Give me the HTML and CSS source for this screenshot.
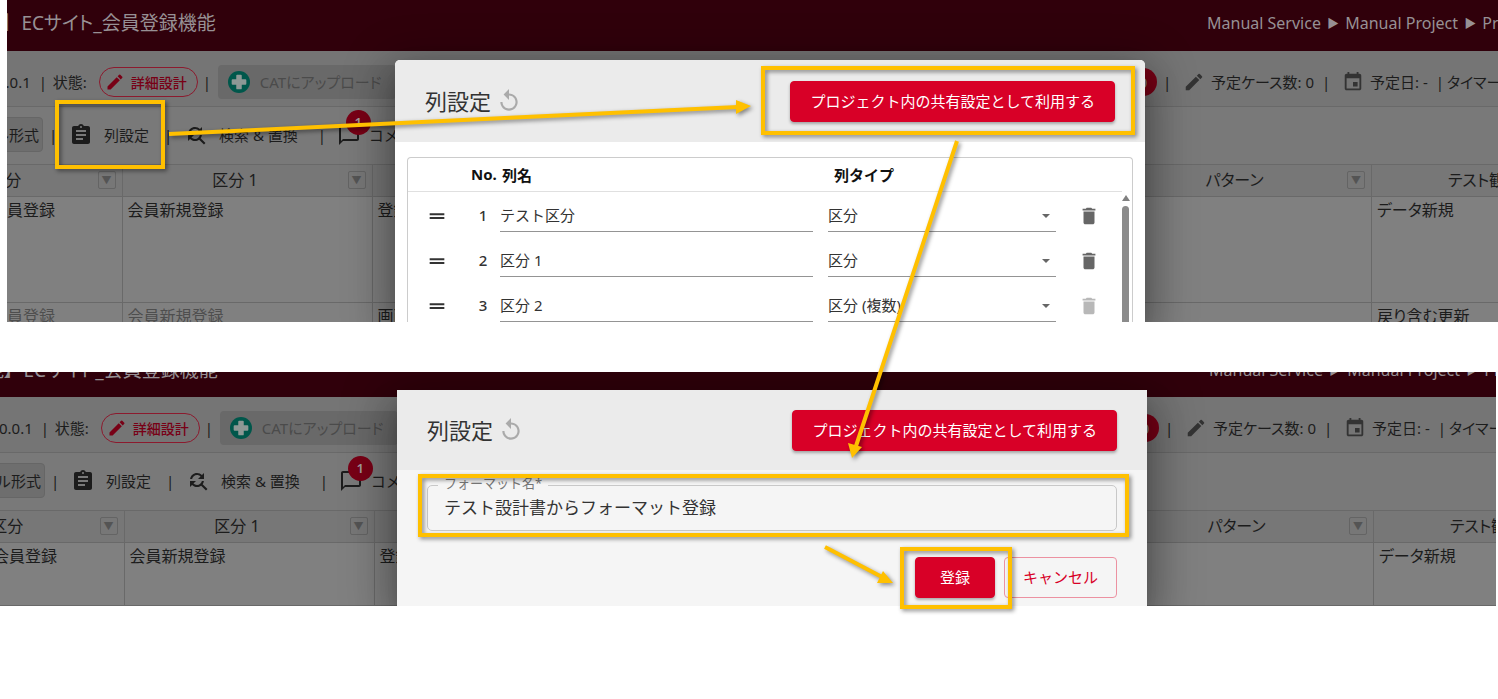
FILE: index.html
```
<!DOCTYPE html>
<html lang="ja">
<head>
    <meta charset="UTF-8">
    <meta name="viewport" content="width=device-width, initial-scale=1.0">
    <title>列設定</title>
    <link rel="stylesheet" href="styles.css">
</head>
<body>
    <!-- アイコン定義 -->
    <svg class="defs" aria-hidden="true">
        <symbol id="i-edit" viewBox="0 0 24 24"><path d="M3 17.25V21h3.75L17.81 9.94l-3.75-3.75L3 17.25zM20.71 7.04a1 1 0 0 0 0-1.41l-2.34-2.34a1 1 0 0 0-1.41 0l-1.83 1.83 3.75 3.75 1.83-1.83z"/></symbol>
        <symbol id="i-plus" viewBox="0 0 24 24"><circle cx="12" cy="12" r="12"/><path fill="#8d9895" d="M10 4h4q1 0 1 1v4h4q1 0 1 1v4q0 1-1 1h-4v4q0 1-1 1h-4q-1 0-1-1v-4H5q-1 0-1-1v-4q0-1 1-1h4V5q0-1 1-1z"/></symbol>
        <symbol id="i-event" viewBox="0 0 24 24"><path d="M17 12h-5v5h5v-5zM16 1v2H8V1H6v2H5c-1.110 0-2 .9-2 2v14c0 1.100.89 2 2 2h14c1.100 0 2-.9 2-2V5c0-1.100-.9-2-2-2h-1V1h-2zm3 18H5V8h14v11z"/></symbol>
        <symbol id="i-assignment" viewBox="0 0 24 24"><path d="M19 3h-4.180C14.400 1.840 13.300 1 12 1s-2.400.84-2.820 2H5c-1.100 0-2 .9-2 2v14c0 1.100.9 2 2 2h14c1.100 0 2-.9 2-2V5c0-1.100-.9-2-2-2zm-7 0c.55 0 1 .45 1 1s-.45 1-1 1-1-.45-1-1 .45-1 1-1zm2 14H7v-2h7v2zm3-4H7v-2h10v2zm0-4H7V7h10v2z"/></symbol>
        <symbol id="i-replace" viewBox="0 0 24 24"><path d="M11 6c1.380 0 2.630.56 3.540 1.460L12 10h6V4l-2.050 2.050C14.680 4.780 12.930 4 11 4c-3.530 0-6.430 2.610-6.920 6H6.100c.46-2.280 2.480-4 4.900-4zm5.640 9.140c.66-.9 1.120-1.970 1.280-3.140H15.900c-.46 2.280-2.480 4-4.900 4-1.380 0-2.630-.56-3.540-1.460L10 12H4v6l2.050-2.050C7.320 17.220 9.070 18 11 18c1.550 0 2.980-.51 4.140-1.360L20 21.490 21.490 20l-4.850-4.860z"/></symbol>
        <symbol id="i-chat" viewBox="0 0 24 24"><path d="M20 2H4c-1.100 0-2 .9-2 2v18l4-4h14c1.100 0 2-.9 2-2V4c0-1.100-.9-2-2-2zm0 14H6l-2 2V4h16v12z"/></symbol>
        <symbol id="i-replay" viewBox="0 0 24 24"><path d="M12 5V1L7 6l5 5V7c3.310 0 6 2.690 6 6s-2.690 6-6 6-6-2.690-6-6H4c0 4.420 3.580 8 8 8s8-3.580 8-8-3.580-8-8-8z"/></symbol>
        <symbol id="i-handle" viewBox="0 0 24 24"><path d="M20 9H4v2.200h16V9zM4 15.200h16V13H4v2.200z"/></symbol>
        <symbol id="i-delete" viewBox="0 0 24 24"><path d="M6 19c0 1.100.9 2 2 2h8c1.100 0 2-.9 2-2V7H6v12zM19 4h-3.500l-1-1h-5l-1 1H5v2h14V4z"/></symbol>
    </svg>

    <main class="page">
        <!-- 1枚目：列設定ダイアログ -->
        <section class="shot shot--first">
            <div class="app">
                <header class="app__header">
                    <div class="app__title">能】&nbsp; ECサイト_会員登録機能</div>
                    <div class="app__crumbs">Manual Service <span class="arrow">▶</span> Manual Project <span class="arrow">▶</span> Pr</div>
                </header>
                <div class="status">
                    <div class="status__left">
                        <span class="status__version">0.0.1</span>
                        <span class="sep">|</span>
                        <span class="status__state">状態:</span>
                        <button class="chip"><svg><use href="#i-edit"/></svg>詳細設計</button>
                        <span class="sep">|</span>
                        <button class="upload" disabled><svg><use href="#i-plus"/></svg>CATにアップロード</button>
                    </div>
                    <div class="status__right">
                        <span class="count">0</span>
                        <span class="sep">|</span>
                        <svg class="status__icon"><use href="#i-edit"/></svg>
                        <span>予定ケース数: 0</span>
                        <span class="sep">|</span>
                        <svg class="status__icon"><use href="#i-event"/></svg>
                        <span>予定日: -</span>
                        <span class="sep">|</span>
                        <span>タイマー</span>
                    </div>
                </div>
                <div class="tools">
                    <button class="tools__mode">セル形式</button>
                    <span class="sep">|</span>
                    <button class="tools__btn"><svg><use href="#i-assignment"/></svg>列設定</button>
                    <span class="sep">|</span>
                    <button class="tools__btn tools__btn--replace"><svg><use href="#i-replace"/></svg>検索 &amp; 置換</button>
                    <span class="sep">|</span>
                    <button class="tools__btn tools__btn--chat"><svg><use href="#i-chat"/></svg>コメント<span class="badge">1</span></button>
                </div>
                <table class="sheet">
                    <colgroup><col class="sheet__col"><col class="sheet__col"><col><col class="sheet__col"><col class="sheet__col"></colgroup>
                    <thead>
                        <tr>
                            <th><div class="sheet__head"><span>テスト区分</span><button class="filter">▼</button></div></th>
                            <th><div class="sheet__head"><span>区分 1</span><button class="filter">▼</button></div></th>
                            <th></th>
                            <th><div class="sheet__head"><span>パターン</span><button class="filter">▼</button></div></th>
                            <th><div class="sheet__head"><span>テスト観点</span><button class="filter">▼</button></div></th>
                        </tr>
                    </thead>
                    <tbody>
                        <tr class="sheet__row">
                            <td class="sheet__end">会員登録</td><td>会員新規登録</td><td>登録</td><td></td><td>データ新規</td>
                        </tr>
                        <tr class="sheet__row sheet__row--next">
                            <td class="sheet__end sheet__dim">会員登録</td><td class="sheet__dim">会員新規登録</td><td>画面</td><td></td><td>戻り含む更新</td>
                        </tr>
                    </tbody>
                </table>
            </div>

            <div class="dialog">
                <div class="dialog__header">
                    <h2 class="dialog__title">列設定</h2>
                    <svg class="dialog__reset"><use href="#i-replay"/></svg>
                    <button class="btn btn--share">プロジェクト内の共有設定として利用する</button>
                </div>
                <div class="columns">
                    <table class="columns__table">
                        <colgroup><col class="c-handle"><col class="c-no"><col><col class="c-type"><col class="c-delete"></colgroup>
                        <thead>
                            <tr><th></th><th class="columns__no">No.</th><th>列名</th><th class="columns__type">列タイプ</th><th></th></tr>
                        </thead>
                        <tbody>
                            <tr>
                                <td class="center"><svg class="handle"><use href="#i-handle"/></svg></td>
                                <td class="num">1</td>
                                <td><input class="line name" type="text" value="テスト区分" aria-label="列名 1"></td>
                                <td><div class="pick"><select class="line" aria-label="列タイプ 1"><option>区分</option></select></div></td>
                                <td class="center"><svg class="trash"><use href="#i-delete"/></svg></td>
                            </tr>
                            <tr>
                                <td class="center"><svg class="handle"><use href="#i-handle"/></svg></td>
                                <td class="num">2</td>
                                <td><input class="line name" type="text" value="区分 1" aria-label="列名 2"></td>
                                <td><div class="pick"><select class="line" aria-label="列タイプ 2"><option>区分</option></select></div></td>
                                <td class="center"><svg class="trash"><use href="#i-delete"/></svg></td>
                            </tr>
                            <tr>
                                <td class="center"><svg class="handle"><use href="#i-handle"/></svg></td>
                                <td class="num">3</td>
                                <td><input class="line name" type="text" value="区分 2" aria-label="列名 3"></td>
                                <td><div class="pick"><select class="line" aria-label="列タイプ 3"><option>区分 (複数)</option></select></div></td>
                                <td class="center"><svg class="trash trash--off"><use href="#i-delete"/></svg></td>
                            </tr>
                        </tbody>
                    </table>
                    <div class="scroll"><span class="scroll__up"></span><span class="scroll__bar"></span></div>
                </div>
            </div>
        </section>

        <!-- 2枚目：フォーマット登録 -->
        <section class="shot shot--second">
            <div class="app">
                <header class="app__header">
                    <div class="app__title">能】&nbsp; ECサイト_会員登録機能</div>
                    <div class="app__crumbs">Manual Service <span class="arrow">▶</span> Manual Project <span class="arrow">▶</span> Pr</div>
                </header>
                <div class="status">
                    <div class="status__left">
                        <span class="status__version">0.0.1</span>
                        <span class="sep">|</span>
                        <span class="status__state">状態:</span>
                        <button class="chip"><svg><use href="#i-edit"/></svg>詳細設計</button>
                        <span class="sep">|</span>
                        <button class="upload" disabled><svg><use href="#i-plus"/></svg>CATにアップロード</button>
                    </div>
                    <div class="status__right">
                        <span class="count">0</span>
                        <span class="sep">|</span>
                        <svg class="status__icon"><use href="#i-edit"/></svg>
                        <span>予定ケース数: 0</span>
                        <span class="sep">|</span>
                        <svg class="status__icon"><use href="#i-event"/></svg>
                        <span>予定日: -</span>
                        <span class="sep">|</span>
                        <span>タイマー</span>
                    </div>
                </div>
                <div class="tools">
                    <button class="tools__mode">セル形式</button>
                    <span class="sep">|</span>
                    <button class="tools__btn"><svg><use href="#i-assignment"/></svg>列設定</button>
                    <span class="sep">|</span>
                    <button class="tools__btn tools__btn--replace"><svg><use href="#i-replace"/></svg>検索 &amp; 置換</button>
                    <span class="sep">|</span>
                    <button class="tools__btn tools__btn--chat"><svg><use href="#i-chat"/></svg>コメント<span class="badge">1</span></button>
                </div>
                <table class="sheet">
                    <colgroup><col class="sheet__col"><col class="sheet__col"><col><col class="sheet__col"><col class="sheet__col"></colgroup>
                    <thead>
                        <tr>
                            <th><div class="sheet__head"><span>テスト区分</span><button class="filter">▼</button></div></th>
                            <th><div class="sheet__head"><span>区分 1</span><button class="filter">▼</button></div></th>
                            <th></th>
                            <th><div class="sheet__head"><span>パターン</span><button class="filter">▼</button></div></th>
                            <th><div class="sheet__head"><span>テスト観点</span><button class="filter">▼</button></div></th>
                        </tr>
                    </thead>
                    <tbody>
                        <tr class="sheet__row">
                            <td class="sheet__end">会員登録</td><td>会員新規登録</td><td>登録</td><td></td><td>データ新規</td>
                        </tr>
                    </tbody>
                </table>
            </div>

            <div class="dialog">
                <div class="dialog__header">
                    <h2 class="dialog__title">列設定</h2>
                    <svg class="dialog__reset"><use href="#i-replay"/></svg>
                    <button class="btn btn--share">プロジェクト内の共有設定として利用する</button>
                </div>
                <form class="form">
                    <div class="field">
                        <label class="field__label" for="formatName">フォーマット名*</label>
                        <input class="field__input" id="formatName" type="text" value="テスト設計書からフォーマット登録">
                    </div>
                    <div class="form__actions">
                        <button class="btn btn--ok" type="button">登録</button>
                        <button class="btn btn--cancel" type="button">キャンセル</button>
                    </div>
                </form>
            </div>
        </section>

        <!-- 説明用の枠と矢印 -->
        <svg class="notes" aria-hidden="true">
            <g fill="none" stroke="#ffc000" stroke-width="4">
                <rect x="57" y="102" width="106" height="65"/>
                <rect x="763" y="68" width="370" height="65"/>
                <rect x="420" y="476" width="707" height="59"/>
                <rect x="902" y="549" width="108" height="58"/>
                <path d="M169 134 738 107M957 141 856 446M825 547 882 577"/>
            </g>
            <path fill="#ffc000" d="M736 100 751 106 736 114zM848 443 862 447 852 458zM883 571 893 583 877 583z"/>
        </svg>
    </main>
</body>
</html>
```
FILE: styles.css
```
* {
    box-sizing: border-box;
}
body {
    margin: 0;
    background: #fff;
    font-family: "Noto Sans", "Noto Sans CJK JP", sans-serif;
    font-size: 15px;
    color: #333;
}
button, input, select {
    font: inherit;
    color: inherit;
    margin: 0;
}
svg {
    fill: currentColor;
    flex: none;
}
.defs {
    position: absolute;
    width: 0;
    height: 0;
}
.page {
    position: relative;
    overflow: hidden;
    padding-bottom: 94px;
}
.shot {
    position: relative;
    overflow: hidden;
}
.shot--first {
    margin-left: 7px;
}
.shot--second {
    margin-top: 50px;
    margin-right: 2px;
}

/* 背景の画面（暗転中） */
.app {
    margin: 0 -124px 0 -135px;
    background: #808080;
    color: #1c1c1c;
    white-space: nowrap;
    font-feature-settings: "palt";
}
.shot--second .app {
    margin: 0 -128px 0 -126px;
}
.app__header {
    display: flex;
    align-items: center;
    justify-content: space-between;
    height: 51px;
    padding: 0 0 5px 111px;
    background: #30000b;
    color: #979094;
}
.shot--second .app__header {
    height: 25px;
    align-items: flex-end;
    padding-bottom: 12px;
}
.app__title {
    font-size: 19px;
    line-height: 30px;
}
.app__crumbs {
    width: 415px;
    font-size: 16px;
    line-height: 30px;
}
.arrow {
    display: inline-block;
    width: 16px;
    font-size: 12px;
    text-align: center;
    vertical-align: 1px;
    line-height: 12px;
}
.status, .status__left, .status__right, .tools, .tools__btn, .chip, .upload {
    display: flex;
    align-items: center;
}
.status {
    justify-content: space-between;
    height: 56px;
    padding: 6px 0 0 125px;
    border-bottom: 1px solid #696969;
    background: #757575;
}
.sep {
    width: 8px;
    text-align: center;
}
.status__version {
    margin-right: 8px;
}
.sep + .status__state {
    margin: 0 12px 0 6px;
}
.chip {
    height: 30px;
    gap: 6px;
    margin-right: 5px;
    padding: 0 10px 0 5px;
    border: 1px solid #8c1a2e;
    border-radius: 15px;
    background: none;
    color: #780016;
    font-size: 14px;
    font-weight: 500;
}
.chip svg {
    width: 20px;
    height: 20px;
}
.upload {
    width: 178px;
    height: 34px;
    gap: 10px;
    margin-left: 7px;
    padding: 0 10px;
    border: 0;
    border-radius: 4px;
    background: #696969;
    color: #4b4b4b;
}
.upload svg {
    width: 22px;
    height: 22px;
    color: #00574b;
}
.status__right {
    width: 493px;
}
.status__right > span {
    flex: none;
}
.count {
    width: 28px;
    height: 28px;
    margin-right: 6px;
    border-radius: 50%;
    background: #780016;
    color: #8a8a8a;
    line-height: 28px;
    text-align: center;
}
.status__icon {
    width: 22px;
    height: 22px;
    margin: 0 6px 0 12px;
    color: #333;
}
.status__icon + span {
    margin-right: 8px;
}
.sep + span {
    margin-left: 3px;
}
.tools {
    height: 58px;
    padding: 0 0 2px 89px;
    border-bottom: 1px solid #696969;
    background: #797979;
    font-feature-settings: normal;
}
.tools__mode {
    width: 82px;
    height: 35px;
    margin-right: 6px;
    padding: 0 3px;
    border: 1px solid #666;
    border-radius: 4px;
    background: #6e6e6e;
    text-align: right;
}
.tools__btn {
    position: relative;
    gap: 11px;
    padding: 0 15px 0 12px;
    border: 0;
    background: none;
}
.tools__btn svg {
    width: 24px;
    height: 24px;
}
.tools__btn--replace {
    padding-right: 20px;
}
.tools__btn--chat {
    gap: 8px;
    padding-left: 11px;
}
.badge {
    position: absolute;
    left: 20px;
    top: -13px;
    width: 25px;
    height: 25px;
    border-radius: 50%;
    background: #780016;
    color: #a09a9b;
    font-size: 13px;
    font-weight: 600;
    line-height: 25px;
    text-align: center;
}
.sheet {
    width: 100%;
    table-layout: fixed;
    border-collapse: collapse;
    font-size: 16px;
}
.sheet__col {
    width: 250px;
}
.sheet th {
    height: 31px;
    padding: 0 6px 0 0;
    border: solid #696969;
    border-width: 0 1px 1px 0;
    background: #777;
    font-weight: 400;
}
.sheet__head {
    display: flex;
    align-items: center;
    line-height: 28px;
}
.sheet__head span {
    flex: 1;
}
.filter {
    width: 18px;
    height: 18px;
    padding: 0;
    border: 1px solid #646464;
    border-radius: 2px;
    background: none;
    color: #545454;
    font-size: 10px;
    line-height: 14px;
}
.sheet__row td {
    height: 106px;
    padding: 1px 5px;
    border: solid #696969;
    border-width: 0 1px 1px 0;
    line-height: 24px;
    vertical-align: top;
}
.sheet__row td.sheet__end {
    padding-left: 119px;
}
.sheet__row td.sheet__dim {
    color: #4e4e4e;
}
.sheet__row--next td {
    height: 20px;
    border-bottom: 0;
}
.shot--first .app {
    height: 322px;
}
.shot--second .sheet__row td {
    height: 63px;
}

/* ダイアログ */
.dialog {
    position: absolute;
    top: 60px;
    bottom: 0;
    left: 388px;
    width: 750px;
    border-radius: 5px 5px 0 0;
    background: #fff;
    box-shadow: 0 11px 15px -7px rgba(0, 0, 0, 0.2), 0 24px 38px 3px rgba(0, 0, 0, 0.14), 0 9px 46px 8px rgba(0, 0, 0, 0.3);
    overflow: hidden;
}
.shot--second .dialog {
    top: 18px;
    left: 397px;
    border-radius: 0;
    background: #f5f5f5;
}
.dialog__header {
    display: flex;
    align-items: center;
    height: 82px;
    padding: 0 30px;
    background: #ebebeb;
}
.shot--second .dialog__header {
    height: 80px;
}
.dialog__title {
    margin: 0 5px 2px 0;
    font-size: 22px;
    font-weight: 400;
}
.dialog__reset {
    width: 26px;
    height: 26px;
    color: #aaa;
}
.btn {
    height: 41px;
    padding: 0 19px 2px;
    border: 1px solid #d80027;
    border-radius: 4px;
    background: #d80027;
    color: #fff;
    box-shadow: 0 2px 3px rgba(0, 0, 0, 0.3);
}
.btn--share {
    margin-left: auto;
}
.btn--ok {
    width: 80px;
}
.btn--cancel {
    padding: 0 18px 2px;
    border-color: #ec91a1;
    background: none;
    color: #d80027;
    box-shadow: none;
}
.columns {
    display: flex;
    margin: 15px 12px 0;
    border: 1px solid #ccc;
    border-bottom: 0;
    border-radius: 4px 4px 0 0;
}
.columns__table {
    flex: 1;
    align-self: flex-start;
    table-layout: fixed;
    border-collapse: collapse;
}
.c-handle {
    width: 58px;
}
.c-no {
    width: 34px;
}
.c-type {
    width: 228px;
}
.c-delete {
    width: 66px;
}
.columns th {
    height: 33px;
    padding: 0 2px;
    border-bottom: 1px solid #e0e0e0;
    color: #111;
    font-weight: 700;
    text-align: left;
}
.columns th.columns__no {
    padding-left: 5px;
}
.columns th.columns__type {
    padding-left: 6px;
}
.columns td {
    height: 45px;
    padding: 9px 0 5px;
    vertical-align: top;
}
.columns .center {
    padding-top: 13px;
}
.columns .num {
    padding-top: 12px;
    line-height: 22px;
    font-weight: 500;
    text-align: center;
}
.columns svg {
    display: block;
    margin: 0 auto;
}
.handle {
    width: 22px;
    height: 22px;
}
.trash {
    width: 22px;
    height: 22px;
    color: #666;
}
.trash--off {
    color: #b8b8b8;
}
.line {
    display: block;
    width: 100%;
    height: 31px;
    padding: 0 0 2px;
    border: 0;
    border-bottom: 1px solid #949494;
    border-radius: 0;
    background: none;
    appearance: none;
    outline: 0;
}
.name {
    width: calc(100% - 15px);
}
.pick {
    position: relative;
}
.pick::after {
    content: "";
    position: absolute;
    right: 6px;
    top: 13px;
    border: solid transparent;
    border-width: 4px 4px 0;
    border-top-color: #666;
}
.scroll {
    width: 10px;
    padding-top: 37px;
}
.scroll__up {
    display: block;
    width: 8px;
    border: solid transparent;
    border-width: 0 4px 6px;
    border-bottom-color: #808080;
}
.scroll__bar {
    display: block;
    width: 7px;
    height: 140px;
    margin-top: 5px;
    border-radius: 4px;
    background: #8b8b8b;
}

/* 登録フォーム */
.form {
    padding: 15px 30px 0;
}
.field {
    position: relative;
}
.field__label {
    position: absolute;
    top: -12px;
    left: 11px;
    padding: 0 6px;
    background: #f5f5f5;
    color: #777;
    font-size: 13px;
    line-height: 20px;
}
.field__input {
    display: block;
    width: 100%;
    height: 46px;
    padding: 0 16px 4px;
    border: 1px solid #c8c8c8;
    border-radius: 5px;
    background: none;
    font-size: 17px;
}
.form__actions {
    display: flex;
    justify-content: flex-end;
    gap: 9px;
    margin-top: 26px;
}

.notes {
    position: absolute;
    top: 0;
    left: 0;
    width: 100%;
    height: 100%;
    filter: drop-shadow(2px 2px 2px rgba(0, 0, 0, 0.45));
    pointer-events: none;
}
```
